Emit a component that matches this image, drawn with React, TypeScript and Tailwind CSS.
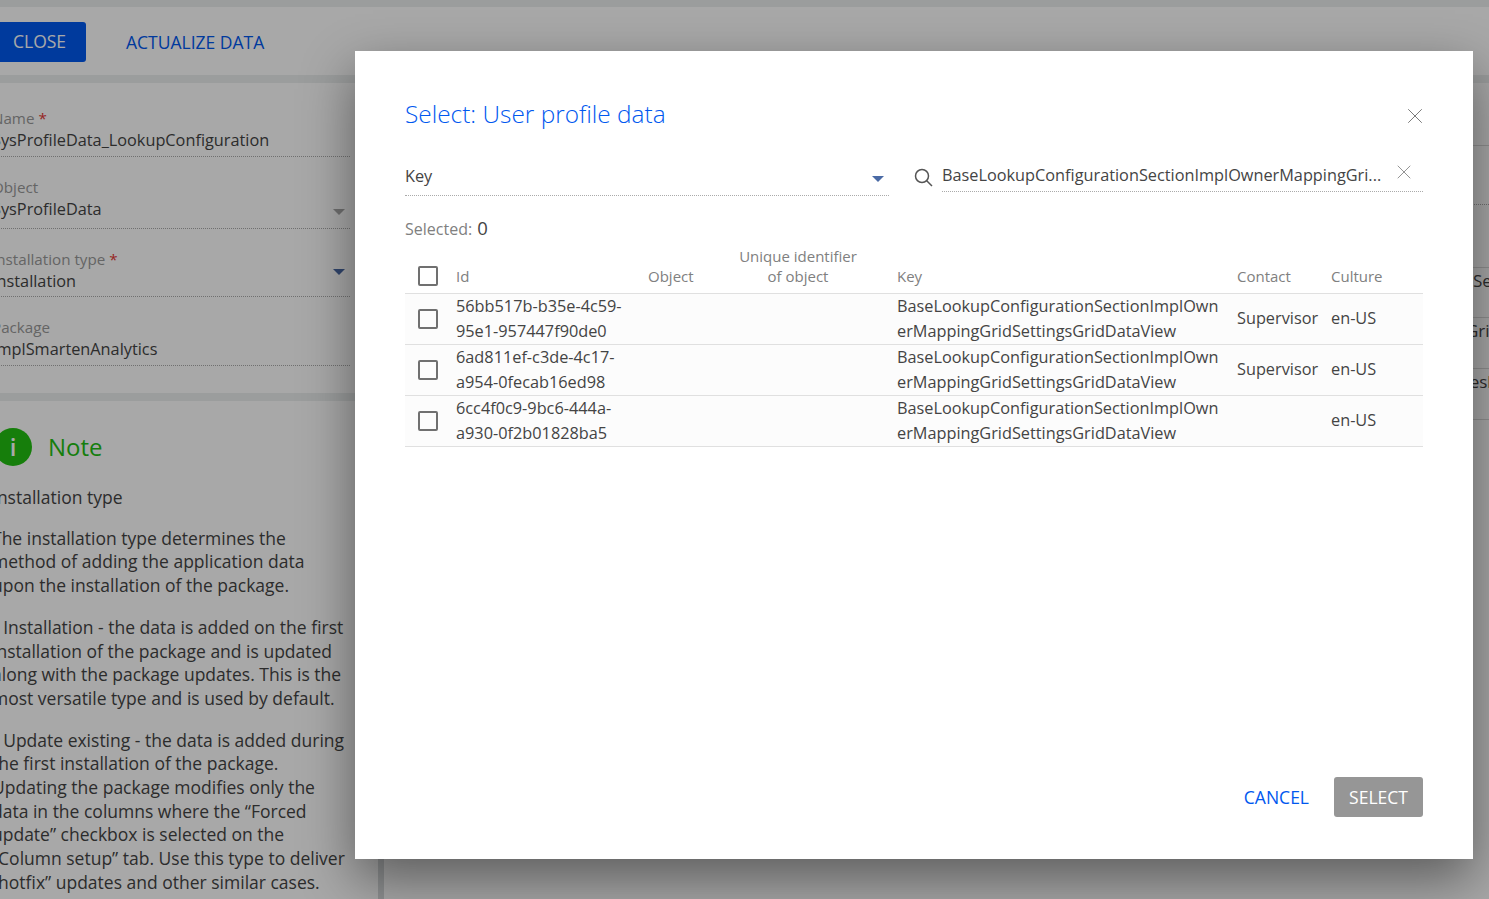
import {X} from 'lucide-react';
import {FC} from 'react';

const fields = [
  {label: 'Name', value: 'SysProfileData_LookupConfiguration', required: true, arrow: '', box: 'h-[74px] pt-[24px]'},
  {label: 'Object', value: 'SysProfileData', required: false, arrow: 'bottom-[13px] border-t-[#a9a9a9]', box: 'h-[72px] pt-[19px]'},
  {label: 'Installation type', value: 'Installation', required: true, arrow: 'bottom-[21px] border-t-[#4a6aa5]', box: 'h-[68px] pt-[19px]'},
  {label: 'Package', value: 'ImplSmartenAnalytics', required: false, arrow: '', box: 'h-[69px] pt-[19px]'},
];

const rows = [
  {id: '56bb517b-b35e-4c59-95e1-957447f90de0', contact: 'Supervisor'},
  {id: '6ad811ef-c3de-4c17-a954-0fecab16ed98', contact: 'Supervisor'},
  {id: '6cc4f0c9-9bc6-444a-a930-0f2b01828ba5', contact: ''},
];

const columns = 'grid grid-cols-[51px_192px_51px_198px_340px_94px_92px]';

const Checkbox: FC = () => <div className="ml-[13px] h-5 w-5 rounded-[2px] border-2 border-[#707070]" />;

const Page: FC = () => (
  <div className="flex h-full flex-col bg-white text-[#444]">
    <div className="h-[7px] bg-[#eceeef]" />
    <div className="flex h-[68px] items-center pt-[1px]">
      <div className="flex h-10 w-[86px] items-center rounded-r-[3px] bg-[#0058ef] pl-[13px] text-[17.5px] text-white">CLOSE</div>
      <div className="mt-[1px] ml-10 text-[17.5px] text-[#0058ef]">ACTUALIZE DATA</div>
    </div>
    <div className="h-2 bg-[#eceeef]" />
    <div className="flex min-h-0 flex-1">
      <div className="-ml-2 w-[386px] shrink-0">
        <div className="h-[310px]">
          {fields.map(f => (
            <div className={`relative mr-[28px] border-b border-dotted border-[#aaa] leading-[22px] ${f.box}`} key={f.label}>
              <div className="text-[15.2px] text-[#999]">
                {f.label}
                {f.required && <span className="ml-1 text-[#e53935]">*</span>}
              </div>
              <div className="text-[16.3px]">{f.value}</div>
              {f.arrow && <div className={`absolute right-[5px] h-0 w-0 border-x-[6px] border-t-[6px] border-x-transparent ${f.arrow}`} />}
            </div>
          ))}
        </div>
        <div className="h-2 bg-[#eceeef]" />
        <div className="pr-[28px]">
          <div className="mt-[27px] ml-[2px] flex items-center gap-4">
            <div className="flex h-[38px] w-[38px] items-center justify-center rounded-full bg-[#22c012] text-[24px] font-semibold text-white">i</div>
            <div className="text-[24px] text-[#22c012]">Note</div>
          </div>
          <div className="mt-[20px] text-[17.5px] leading-[23.7px]">
            <p>Installation type</p>
            <p className="mt-[17px]">The installation type determines the method of adding the application data upon the installation of the package.</p>
            <p className="mt-[18px]">• Installation - the data is added on the first installation of the package and is updated along with the package updates. This is the most versatile type and is used by default.</p>
            <p className="mt-[18px]">• Update existing - the data is added during the first installation of the package. Updating the package modifies only the data in the columns where the “Forced update” checkbox is selected on the “Column setup” tab. Use this type to deliver “hotfix” updates and other similar cases.</p>
          </div>
        </div>
      </div>
      <div className="w-[6px] shrink-0 bg-[#d8dbdd]" />
      <div className="min-w-0 flex-1 overflow-hidden text-[17px] leading-[24px] whitespace-nowrap">
        <div className="h-[63px] border-b border-[#d9d9d9]" />
        <div className="h-[59px] border-b border-dotted border-[#aaa]" />
        <div className="h-[63px] border-b border-[#d9d9d9]" />
        <div className="h-[50px] border-b border-[#d9d9d9] pt-[1px] pl-[1089px]">Search</div>
        <div className="h-[51px] border-b border-[#d9d9d9] pt-[1px] pl-[1082px]">Grid</div>
        <div className="h-[51px] border-b border-[#d9d9d9] pt-[1px] pl-[1053px]">Refresh</div>
      </div>
    </div>
  </div>
);

const App: FC = () => (
  <div className="relative h-[899px] w-[1489px] overflow-hidden font-['Open_Sans',sans-serif]">
    <Page />
    <div className="absolute inset-0 bg-black/[0.34]" />
    <div className="absolute top-[51px] left-[355px] flex h-[808px] w-[1118px] flex-col bg-white px-[50px] text-[#444] shadow-[0_20px_50px_rgba(0,0,0,0.45)]">
      <div className="mt-[46px] flex h-[34px] items-center justify-between">
        <h1 className="text-[24.4px] font-light text-[#0058ef]">Select: User profile data</h1>
        <X className="mt-[4px] -mr-[5px] h-[26px] w-[26px] text-[#777]" strokeWidth={0.9} />
      </div>
      <div className="mt-[20px] flex h-[47px] items-start gap-[53px]">
        <div className="relative flex h-[45px] w-[484px] items-center border-b border-dotted border-[#aaa] pt-[6px] text-[16.3px]">
          Key
          <div className="absolute top-[25px] right-[5px] h-0 w-0 border-x-[6px] border-t-[6px] border-x-transparent border-t-[#4a6aa5]" />
        </div>
        <div className="relative flex-1">
          <svg className="absolute top-[17px] -left-[28px] h-5 w-5 text-[#555]" fill="none" stroke="currentColor" strokeWidth="1.5" viewBox="0 0 20 20">
            <circle cx="8" cy="8" r="6.5" />
            <path d="M12.7 12.7 18 18" />
          </svg>
          <div className="flex h-[41px] items-center justify-between border-b border-dotted border-[#aaa] pt-[9px] pr-[7px] text-[16.3px]">
            <span>BaseLookupConfigurationSectionImplOwnerMappingGri...</span>
            <X className="-mt-[7px] h-[24px] w-[24px] text-[#888]" strokeWidth={0.9} />
          </div>
        </div>
      </div>
      <div className="mt-[19px] text-[16px] leading-[22px] text-[#808080]">
        Selected: <span className="ml-[1px] text-[18.5px] text-[#444]">0</span>
      </div>
      <div className="mt-[6px] text-[16.3px]">
        <div className={`${columns} h-[48px] items-end border-b border-[#e0e0e0] pb-[7px] text-[15px] leading-[20px] text-[#808080]`}>
          <div>
            <Checkbox />
          </div>
          <div>Id</div>
          <div>Object</div>
          <div className="text-center">
            Unique identifier
            <br />
            of object
          </div>
          <div>Key</div>
          <div>Contact</div>
          <div>Culture</div>
        </div>
        {rows.map(r => (
          <div className={`${columns} h-[51px] items-center border-b border-[#e0e0e0] bg-[#fcfcfc] leading-[25px]`} key={r.id}>
            <Checkbox />
            <div className="w-[175px]">{r.id}</div>
            <div />
            <div />
            <div className="w-[330px] break-all">BaseLookupConfigurationSectionImplOwnerMappingGridSettingsGridDataView</div>
            <div className="-mt-[2px]">{r.contact}</div>
            <div className="-mt-[2px]">en-US</div>
          </div>
        ))}
      </div>
      <div className="mt-auto mb-[42px] flex items-center justify-end gap-[25px] text-[17.5px]">
        <span className="text-[#0058ef]">CANCEL</span>
        <div className="flex h-10 w-[89px] items-center justify-center rounded-[3px] bg-[#969696] text-white">SELECT</div>
      </div>
    </div>
  </div>
);

export default App;
